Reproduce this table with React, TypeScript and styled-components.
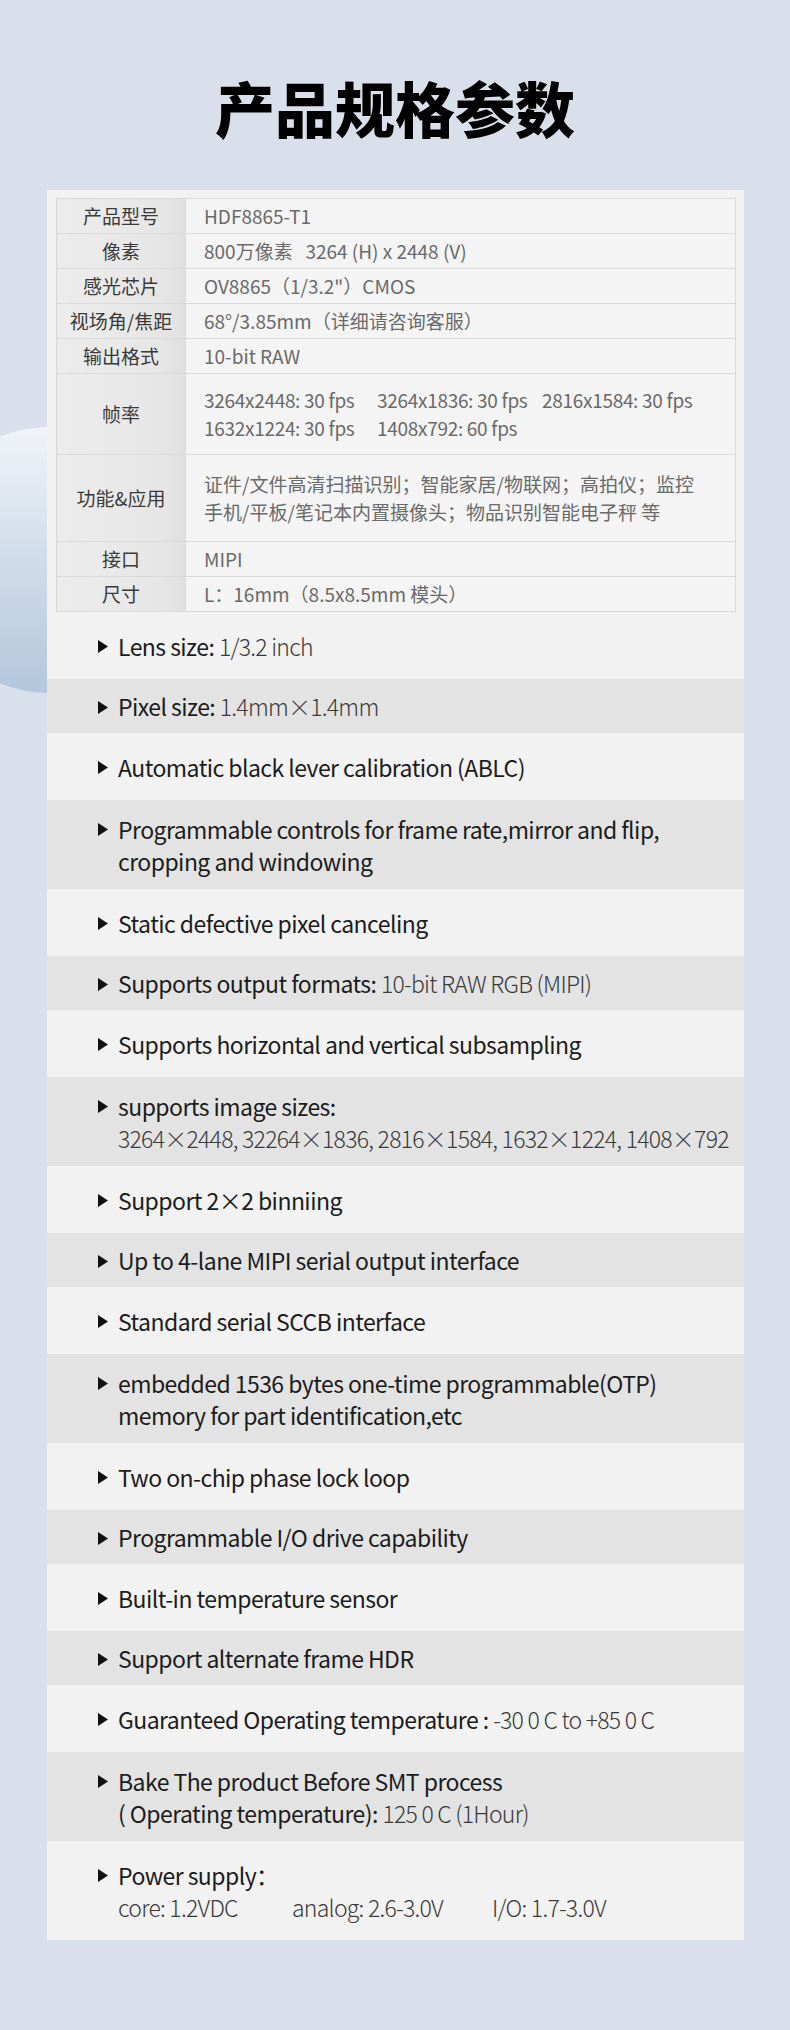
import React from "react";
import styled, { createGlobalStyle } from "styled-components";

const GlobalStyle = createGlobalStyle`
  html, body {
    margin: 0;
    padding: 0;
  }
  body {
    background: #d9e0eb;
    font-family: "Noto Sans CJK SC", "Noto Sans", sans-serif;
  }
`;

const Page = styled.div`
  position: relative;
  box-sizing: border-box;
  min-height: 2030px;
  padding: 75px 0 92px;
  overflow: hidden;
  background: #d9e0eb;
`;

// soft decorative sphere peeking out behind the card
const Orb = styled.div`
  position: absolute;
  left: -83px;
  top: 427px;
  width: 266px;
  height: 266px;
  border-radius: 50%;
  background: linear-gradient(180deg, #f1f4f9 0%, #d3deeb 45%, #b3c6dc 100%);
`;

const Title = styled.h1`
  margin: 0 0 51px;
  text-align: center;
  font-size: 60px;
  line-height: 64px;
  font-weight: 900;
  color: #000;
`;

const Card = styled.div`
  position: relative;
  z-index: 1;
  width: 697px;
  margin: 0 46px 0 47px;
  background: #f2f2f2;
`;

const TableWrap = styled.div`
  padding: 8px 8px 0 9px;
`;

const SpecTable = styled.table`
  width: 100%;
  border-collapse: collapse;
  table-layout: fixed;
`;

const LabelCell = styled.th<{ $pad: number }>`
  width: 129px;
  box-sizing: border-box;
  padding: ${(p) => p.$pad}px 0;
  border: 1px solid #dadada;
  background: linear-gradient(90deg, #ececec 0%, #e6e6e6 80%, #e0e0e0 100%);
  color: #3a3a3a;
  font-size: 19px;
  font-weight: 400;
  line-height: 28px;
  text-align: center;
  white-space: nowrap;
`;

const ValueCell = styled.td<{ $pad: number }>`
  padding: ${(p) => p.$pad}px 0 ${(p) => p.$pad}px 18px;
  border: 1px solid #dadada;
  background: #f4f4f4;
  color: #6a6a6a;
  font-size: 19px;
  font-weight: 400;
  line-height: 28px;
  text-align: left;
  white-space: pre;
`;

const FpsGrid = styled.div`
  display: grid;
  grid-template-columns: 173px 165px auto;
  letter-spacing: -0.3px;
`;

const FeatureList = styled.ul`
  list-style: none;
  margin: 0;
  padding: 0;
`;

const Feature = styled.li<{ $shade: boolean; $pad: number }>`
  display: grid;
  grid-template-columns: 20px 1fr;
  padding: ${(p) => p.$pad}px 20px ${(p) => p.$pad}px 51px;
  background: ${(p) => (p.$shade ? "#e3e3e3" : "#f2f2f2")};
  color: #1c1c1c;
  font-size: 23px;
  letter-spacing: -0.55px;
  line-height: 32px;
`;

const Bullet = styled.span`
  display: flex;
  align-items: center;
  height: 32px;
  padding-top: 2px;
  box-sizing: border-box;
`;

const Text = styled.div`
  white-space: nowrap;
`;

const Val = styled.span`
  font-weight: 300;
  color: #3a3a3a;
  letter-spacing: -0.75px;
`;

const SupplyLine = styled.div`
  display: grid;
  grid-template-columns: 174px 200px auto;
  font-weight: 300;
  color: #3a3a3a;
  letter-spacing: -0.75px;
`;

function Triangle() {
  return (
    <svg width="10" height="13" viewBox="0 0 10 13">
      <path d="M0 0 L10 6.5 L0 13 Z" fill="#111" />
    </svg>
  );
}

const specs: { label: string; pad: number; value: React.ReactNode }[] = [
  { label: "产品型号", pad: 3, value: "HDF8865-T1" },
  { label: "像素", pad: 3, value: "800万像素   3264 (H) x 2448 (V)" },
  { label: "感光芯片", pad: 3, value: "OV8865（1/3.2\"）CMOS" },
  { label: "视场角/焦距", pad: 3, value: "68°/3.85mm（详细请咨询客服）" },
  { label: "输出格式", pad: 3, value: "10-bit RAW" },
  {
    label: "帧率",
    pad: 12,
    value: (
      <FpsGrid>
        <span>3264x2448: 30 fps</span>
        <span>3264x1836: 30 fps</span>
        <span>2816x1584: 30 fps</span>
        <span>1632x1224: 30 fps</span>
        <span>1408x792: 60 fps</span>
      </FpsGrid>
    ),
  },
  {
    label: "功能&应用",
    pad: 15,
    value: (
      <>
        证件/文件高清扫描识别；智能家居/物联网；高拍仪；监控
        <br />
        手机/平板/笔记本内置摄像头；物品识别智能电子秤 等
      </>
    ),
  },
  { label: "接口", pad: 3, value: "MIPI" },
  { label: "尺寸", pad: 3, value: "L：16mm（8.5x8.5mm 模头）" },
];

const features: { main: React.ReactNode; second?: React.ReactNode }[] = [
  { main: <>Lens size: <Val>1/3.2 inch</Val></> },
  { main: <>Pixel size: <Val>1.4mm×1.4mm</Val></> },
  { main: "Automatic black lever calibration (ABLC)" },
  {
    main: "Programmable controls for frame rate,mirror and flip,",
    second: "cropping and windowing",
  },
  { main: "Static defective pixel canceling" },
  { main: <>Supports output formats: <Val>10-bit RAW RGB (MIPI)</Val></> },
  { main: "Supports horizontal and vertical subsampling" },
  {
    main: "supports image sizes:",
    second: <Val>3264×2448, 32264×1836, 2816×1584, 1632×1224, 1408×792</Val>,
  },
  { main: "Support 2×2 binniing" },
  { main: "Up to 4-lane MIPI serial output interface" },
  { main: "Standard serial SCCB interface" },
  {
    main: "embedded 1536 bytes one-time programmable(OTP)",
    second: "memory for part identification,etc",
  },
  { main: "Two on-chip phase lock loop" },
  { main: "Programmable I/O drive capability" },
  { main: "Built-in temperature sensor" },
  { main: "Support alternate frame HDR" },
  { main: <>Guaranteed Operating temperature : <Val>-30 0 C to +85 0 C</Val></> },
  {
    main: "Bake The product Before SMT process",
    second: <>( Operating temperature): <Val>125 0 C (1Hour)</Val></>,
  },
  {
    main: "Power supply：",
    second: (
      <SupplyLine>
        <span>core: 1.2VDC</span>
        <span>analog: 2.6-3.0V</span>
        <span>I/O: 1.7-3.0V</span>
      </SupplyLine>
    ),
  },
];

export default function App() {
  return (
    <>
      <GlobalStyle />
      <Page>
        <Orb />
        <Title>产品规格参数</Title>
        <Card>
          <TableWrap>
            <SpecTable>
              <tbody>
                {specs.map((s) => (
                  <tr key={s.label}>
                    <LabelCell $pad={s.pad}>{s.label}</LabelCell>
                    <ValueCell $pad={s.pad}>{s.value}</ValueCell>
                  </tr>
                ))}
              </tbody>
            </SpecTable>
          </TableWrap>
          <FeatureList>
            {features.map((f, i) => {
              const shade = i % 2 === 1;
              const pad = shade ? (f.second ? 12.5 : 11) : 17.5;
              return (
                <Feature key={i} $shade={shade} $pad={pad}>
                  <Bullet>
                    <Triangle />
                  </Bullet>
                  <Text>
                    {f.main}
                    {f.second && <div>{f.second}</div>}
                  </Text>
                </Feature>
              );
            })}
          </FeatureList>
        </Card>
      </Page>
    </>
  );
}
